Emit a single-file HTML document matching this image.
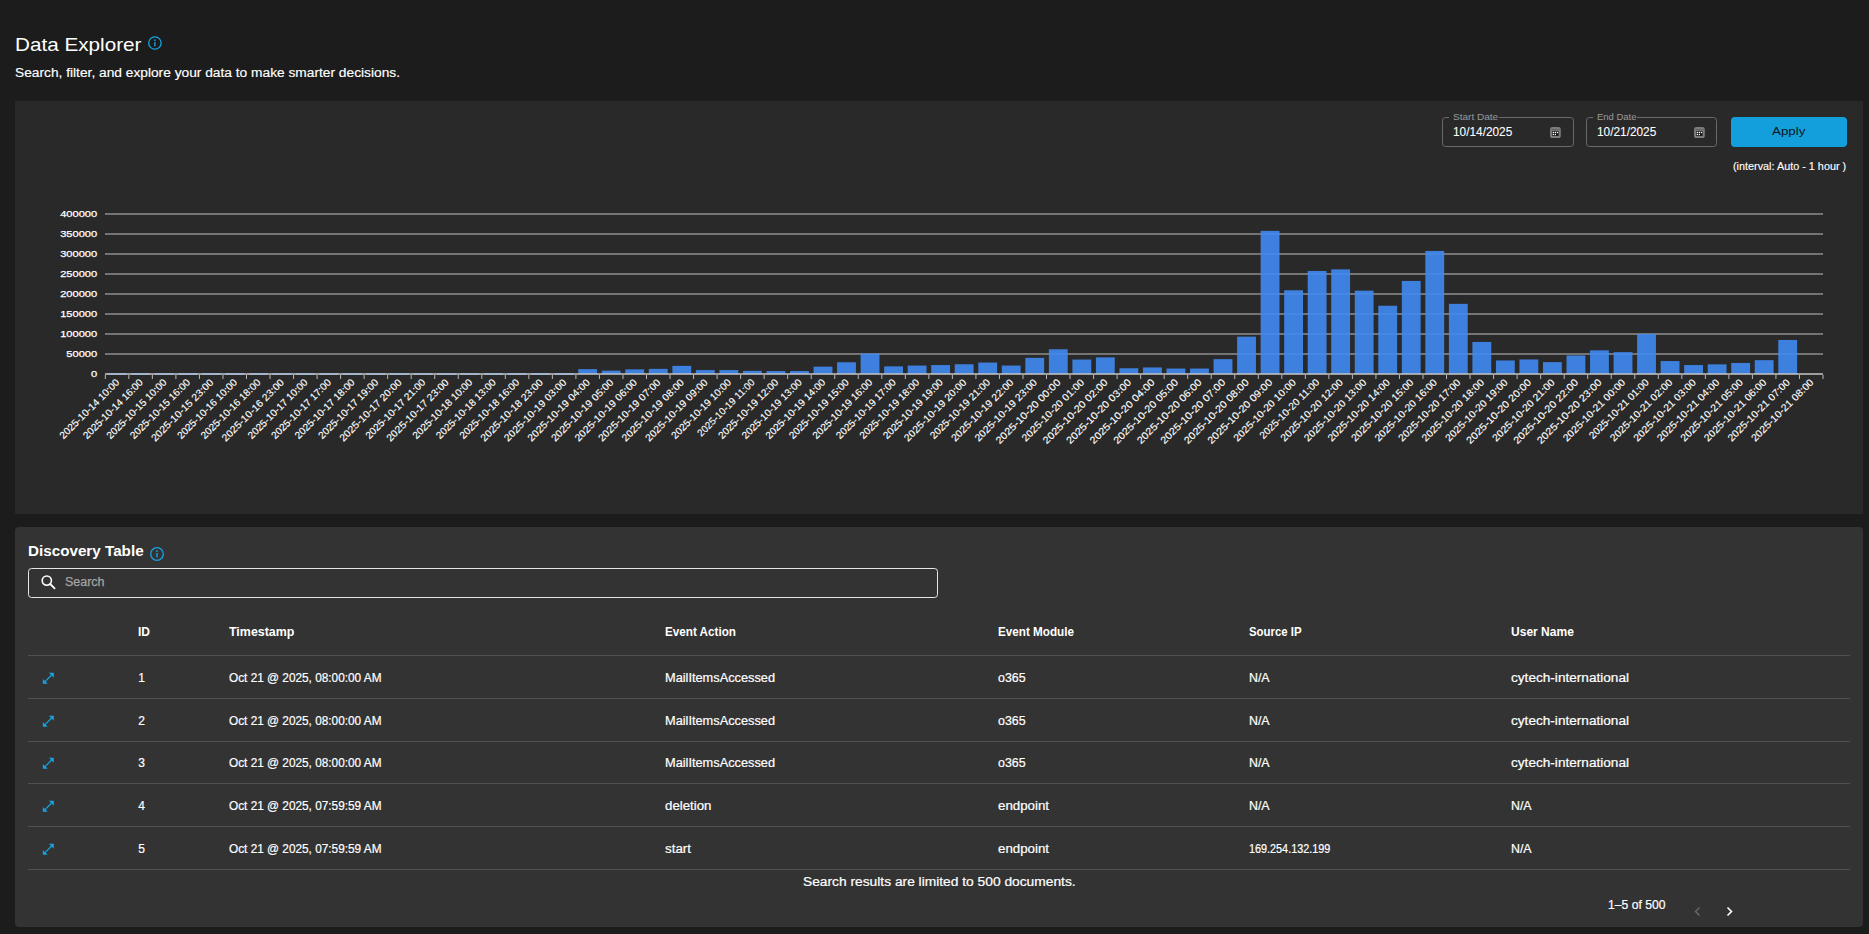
<!DOCTYPE html>
<html><head><meta charset="utf-8"><style>
html,body{margin:0;padding:0;}
body{width:1869px;height:934px;background:#1c1c1c;position:relative;overflow:hidden;font-family:"Liberation Sans",sans-serif;}
.t{position:absolute;white-space:nowrap;line-height:1em;transform-origin:0 0;}
.abs{position:absolute;}
</style></head><body>
<div class="t" style="left:14.60px;top:35.96px;font-size:18.6px;color:#fff;transform:scaleX(1.1124);">Data Explorer</div>
<svg class="abs" style="left:147px;top:36px" width="16" height="16" viewBox="0 0 16 16"><circle cx="7.9" cy="7" r="6.2" fill="none" stroke="#14a3e3" stroke-width="1.3"/><rect x="7.2" y="6" width="1.4" height="4.3" fill="#14a3e3"/><circle cx="7.9" cy="4.2" r="0.85" fill="#14a3e3"/></svg>
<div class="t" style="left:15.00px;top:67.04px;font-size:12px;color:#fff;-webkit-text-stroke:0.15px #fff;transform:scaleX(1.1452);">Search, filter, and explore your data to make smarter decisions.</div>
<div class="abs" style="left:15px;top:101px;width:1848px;height:413px;background:#292929"></div>
<div class="abs" style="left:1442px;top:117px;width:129.5px;height:27.6px;border:1px solid #6a6a6a;border-radius:3.5px;box-sizing:content-box"></div>
<div class="abs" style="left:1449px;top:115px;width:50.2px;height:5px;background:#292929"></div>
<div class="t" style="left:1453.00px;top:112.70px;font-size:8.5px;color:#9a9a9a;transform:scaleX(1.1812);">Start Date</div>
<div class="t" style="left:1453.10px;top:126.04px;font-size:12px;color:#fff;-webkit-text-stroke:0.08px #fff;transform:scaleX(0.9873);">10/14/2025</div>
<svg class="abs" style="left:1550.00px;top:126.9px" width="11" height="11.4" viewBox="0 0 11 11.4"><rect x="0" y="0" width="10.8" height="11.2" rx="2.2" fill="#7c7c7c"/><rect x="1.4" y="2.3" width="8" height="0.9" fill="#5a5a5a"/><rect x="2.15" y="4.2" width="6.5" height="4.7" fill="#171717"/><circle cx="3.35" cy="5.6" r="0.75" fill="#fff"/><circle cx="5.35" cy="5.6" r="0.75" fill="#fff"/><circle cx="7.45" cy="5.6" r="0.75" fill="#fff"/><circle cx="3.35" cy="7.6" r="0.75" fill="#fff"/><circle cx="5.35" cy="7.6" r="0.75" fill="#fff"/></svg>
<div class="abs" style="left:1585.6px;top:117px;width:129.5px;height:27.6px;border:1px solid #6a6a6a;border-radius:3.5px;box-sizing:content-box"></div>
<div class="abs" style="left:1592.6px;top:115px;width:44.5px;height:5px;background:#292929"></div>
<div class="t" style="left:1596.60px;top:112.70px;font-size:8.5px;color:#9a9a9a;transform:scaleX(1.1145);">End Date</div>
<div class="t" style="left:1596.70px;top:126.04px;font-size:12px;color:#fff;-webkit-text-stroke:0.08px #fff;transform:scaleX(0.9873);">10/21/2025</div>
<svg class="abs" style="left:1693.60px;top:126.9px" width="11" height="11.4" viewBox="0 0 11 11.4"><rect x="0" y="0" width="10.8" height="11.2" rx="2.2" fill="#7c7c7c"/><rect x="1.4" y="2.3" width="8" height="0.9" fill="#5a5a5a"/><rect x="2.15" y="4.2" width="6.5" height="4.7" fill="#171717"/><circle cx="3.35" cy="5.6" r="0.75" fill="#fff"/><circle cx="5.35" cy="5.6" r="0.75" fill="#fff"/><circle cx="7.45" cy="5.6" r="0.75" fill="#fff"/><circle cx="3.35" cy="7.6" r="0.75" fill="#fff"/><circle cx="5.35" cy="7.6" r="0.75" fill="#fff"/></svg>
<div class="abs" style="left:1731px;top:117px;width:116px;height:30px;background:#129fdc;border-radius:4px"></div>
<div class="t" style="left:1772.10px;top:125.59px;font-size:11px;color:#0b1620;transform:scaleX(1.2138);">Apply</div>
<div class="t" style="left:1733.10px;top:162.08px;font-size:10.3px;color:#fff;-webkit-text-stroke:0.12px #fff;transform:scaleX(1.0517);">(interval: Auto - 1 hour )</div>
<svg class="abs" style="left:0;top:0" width="1869" height="520" viewBox="0 0 1869 520"><rect x="105" y="353" width="1718" height="2" fill="#747474"/><rect x="105" y="333" width="1718" height="2" fill="#747474"/><rect x="105" y="313" width="1718" height="2" fill="#747474"/><rect x="105" y="293" width="1718" height="2" fill="#747474"/><rect x="105" y="273" width="1718" height="2" fill="#747474"/><rect x="105" y="253" width="1718" height="2" fill="#747474"/><rect x="105" y="233" width="1718" height="2" fill="#747474"/><rect x="105" y="213" width="1718" height="2" fill="#747474"/><rect x="107.65" y="373" width="18.85" height="2" fill="#408af2" fill-opacity="0.9"/><rect x="131.18" y="373" width="18.85" height="2" fill="#408af2" fill-opacity="0.9"/><rect x="154.71" y="373" width="18.85" height="2" fill="#408af2" fill-opacity="0.9"/><rect x="178.24" y="373" width="18.85" height="2" fill="#408af2" fill-opacity="0.9"/><rect x="201.77" y="373" width="18.85" height="2" fill="#408af2" fill-opacity="0.9"/><rect x="225.30" y="373" width="18.85" height="2" fill="#408af2" fill-opacity="0.9"/><rect x="248.83" y="373" width="18.85" height="2" fill="#408af2" fill-opacity="0.9"/><rect x="272.36" y="373" width="18.85" height="2" fill="#408af2" fill-opacity="0.9"/><rect x="295.89" y="373" width="18.85" height="2" fill="#408af2" fill-opacity="0.9"/><rect x="319.42" y="373" width="18.85" height="2" fill="#408af2" fill-opacity="0.9"/><rect x="342.95" y="373" width="18.85" height="2" fill="#408af2" fill-opacity="0.9"/><rect x="366.48" y="373" width="18.85" height="2" fill="#408af2" fill-opacity="0.9"/><rect x="390.01" y="373" width="18.85" height="2" fill="#408af2" fill-opacity="0.9"/><rect x="413.54" y="373" width="18.85" height="2" fill="#408af2" fill-opacity="0.9"/><rect x="437.07" y="373" width="18.85" height="2" fill="#408af2" fill-opacity="0.9"/><rect x="460.60" y="373" width="18.85" height="2" fill="#408af2" fill-opacity="0.9"/><rect x="484.13" y="373" width="18.85" height="2" fill="#408af2" fill-opacity="0.9"/><rect x="507.66" y="373" width="18.85" height="2" fill="#408af2" fill-opacity="0.9"/><rect x="531.19" y="373" width="18.85" height="2" fill="#408af2" fill-opacity="0.9"/><rect x="554.72" y="373" width="18.85" height="2" fill="#408af2" fill-opacity="0.9"/><rect x="578.25" y="369.15" width="18.85" height="4.85" fill="#408af2" fill-opacity="0.9"/><rect x="601.78" y="370.65" width="18.85" height="3.35" fill="#408af2" fill-opacity="0.9"/><rect x="625.31" y="369.35" width="18.85" height="4.65" fill="#408af2" fill-opacity="0.9"/><rect x="648.84" y="368.85" width="18.85" height="5.15" fill="#408af2" fill-opacity="0.9"/><rect x="672.37" y="365.85" width="18.85" height="8.15" fill="#408af2" fill-opacity="0.9"/><rect x="695.90" y="370.05" width="18.85" height="3.95" fill="#408af2" fill-opacity="0.9"/><rect x="719.43" y="370.05" width="18.85" height="3.95" fill="#408af2" fill-opacity="0.9"/><rect x="742.96" y="370.85" width="18.85" height="3.15" fill="#408af2" fill-opacity="0.9"/><rect x="766.49" y="371.05" width="18.85" height="2.95" fill="#408af2" fill-opacity="0.9"/><rect x="790.02" y="371.05" width="18.85" height="2.95" fill="#408af2" fill-opacity="0.9"/><rect x="813.55" y="366.65" width="18.85" height="7.35" fill="#408af2" fill-opacity="0.9"/><rect x="837.08" y="362.25" width="18.85" height="11.75" fill="#408af2" fill-opacity="0.9"/><rect x="860.61" y="353.55" width="18.85" height="20.45" fill="#408af2" fill-opacity="0.9"/><rect x="884.14" y="366.35" width="18.85" height="7.65" fill="#408af2" fill-opacity="0.9"/><rect x="907.67" y="365.55" width="18.85" height="8.45" fill="#408af2" fill-opacity="0.9"/><rect x="931.20" y="365.05" width="18.85" height="8.95" fill="#408af2" fill-opacity="0.9"/><rect x="954.73" y="364.25" width="18.85" height="9.75" fill="#408af2" fill-opacity="0.9"/><rect x="978.27" y="362.55" width="18.85" height="11.45" fill="#408af2" fill-opacity="0.9"/><rect x="1001.80" y="365.55" width="18.85" height="8.45" fill="#408af2" fill-opacity="0.9"/><rect x="1025.33" y="357.85" width="18.85" height="16.15" fill="#408af2" fill-opacity="0.9"/><rect x="1048.86" y="349.25" width="18.85" height="24.75" fill="#408af2" fill-opacity="0.9"/><rect x="1072.39" y="359.55" width="18.85" height="14.45" fill="#408af2" fill-opacity="0.9"/><rect x="1095.92" y="357.35" width="18.85" height="16.65" fill="#408af2" fill-opacity="0.9"/><rect x="1119.45" y="368.25" width="18.85" height="5.75" fill="#408af2" fill-opacity="0.9"/><rect x="1142.98" y="367.45" width="18.85" height="6.55" fill="#408af2" fill-opacity="0.9"/><rect x="1166.51" y="368.55" width="18.85" height="5.45" fill="#408af2" fill-opacity="0.9"/><rect x="1190.04" y="368.55" width="18.85" height="5.45" fill="#408af2" fill-opacity="0.9"/><rect x="1213.57" y="359.15" width="18.85" height="14.85" fill="#408af2" fill-opacity="0.9"/><rect x="1237.10" y="336.65" width="18.85" height="37.35" fill="#408af2" fill-opacity="0.9"/><rect x="1260.63" y="230.85" width="18.85" height="143.15" fill="#408af2" fill-opacity="0.9"/><rect x="1284.16" y="290.25" width="18.85" height="83.75" fill="#408af2" fill-opacity="0.9"/><rect x="1307.69" y="270.95" width="18.85" height="103.05" fill="#408af2" fill-opacity="0.9"/><rect x="1331.22" y="269.35" width="18.85" height="104.65" fill="#408af2" fill-opacity="0.9"/><rect x="1354.75" y="290.65" width="18.85" height="83.35" fill="#408af2" fill-opacity="0.9"/><rect x="1378.28" y="305.75" width="18.85" height="68.25" fill="#408af2" fill-opacity="0.9"/><rect x="1401.81" y="280.95" width="18.85" height="93.05" fill="#408af2" fill-opacity="0.9"/><rect x="1425.34" y="250.95" width="18.85" height="123.05" fill="#408af2" fill-opacity="0.9"/><rect x="1448.87" y="303.85" width="18.85" height="70.15" fill="#408af2" fill-opacity="0.9"/><rect x="1472.40" y="341.95" width="18.85" height="32.05" fill="#408af2" fill-opacity="0.9"/><rect x="1495.93" y="360.45" width="18.85" height="13.55" fill="#408af2" fill-opacity="0.9"/><rect x="1519.46" y="359.45" width="18.85" height="14.55" fill="#408af2" fill-opacity="0.9"/><rect x="1542.99" y="362.15" width="18.85" height="11.85" fill="#408af2" fill-opacity="0.9"/><rect x="1566.52" y="355.45" width="18.85" height="18.55" fill="#408af2" fill-opacity="0.9"/><rect x="1590.05" y="350.35" width="18.85" height="23.65" fill="#408af2" fill-opacity="0.9"/><rect x="1613.58" y="352.15" width="18.85" height="21.85" fill="#408af2" fill-opacity="0.9"/><rect x="1637.11" y="333.95" width="18.85" height="40.05" fill="#408af2" fill-opacity="0.9"/><rect x="1660.64" y="361.05" width="18.85" height="12.95" fill="#408af2" fill-opacity="0.9"/><rect x="1684.17" y="365.05" width="18.85" height="8.95" fill="#408af2" fill-opacity="0.9"/><rect x="1707.70" y="364.35" width="18.85" height="9.65" fill="#408af2" fill-opacity="0.9"/><rect x="1731.23" y="362.95" width="18.85" height="11.05" fill="#408af2" fill-opacity="0.9"/><rect x="1754.76" y="360.15" width="18.85" height="13.85" fill="#408af2" fill-opacity="0.9"/><rect x="1778.29" y="339.95" width="18.85" height="34.05" fill="#408af2" fill-opacity="0.9"/><rect x="105" y="373" width="1718" height="2" fill="#c6c6c6" fill-opacity="0.75"/><rect x="104.80" y="375" width="1" height="4" fill="#b8b8b8"/><rect x="128.33" y="375" width="1" height="4" fill="#b8b8b8"/><rect x="151.86" y="375" width="1" height="4" fill="#b8b8b8"/><rect x="175.39" y="375" width="1" height="4" fill="#b8b8b8"/><rect x="198.92" y="375" width="1" height="4" fill="#b8b8b8"/><rect x="222.45" y="375" width="1" height="4" fill="#b8b8b8"/><rect x="245.98" y="375" width="1" height="4" fill="#b8b8b8"/><rect x="269.51" y="375" width="1" height="4" fill="#b8b8b8"/><rect x="293.04" y="375" width="1" height="4" fill="#b8b8b8"/><rect x="316.57" y="375" width="1" height="4" fill="#b8b8b8"/><rect x="340.10" y="375" width="1" height="4" fill="#b8b8b8"/><rect x="363.63" y="375" width="1" height="4" fill="#b8b8b8"/><rect x="387.16" y="375" width="1" height="4" fill="#b8b8b8"/><rect x="410.69" y="375" width="1" height="4" fill="#b8b8b8"/><rect x="434.22" y="375" width="1" height="4" fill="#b8b8b8"/><rect x="457.75" y="375" width="1" height="4" fill="#b8b8b8"/><rect x="481.28" y="375" width="1" height="4" fill="#b8b8b8"/><rect x="504.81" y="375" width="1" height="4" fill="#b8b8b8"/><rect x="528.34" y="375" width="1" height="4" fill="#b8b8b8"/><rect x="551.87" y="375" width="1" height="4" fill="#b8b8b8"/><rect x="575.40" y="375" width="1" height="4" fill="#b8b8b8"/><rect x="598.93" y="375" width="1" height="4" fill="#b8b8b8"/><rect x="622.46" y="375" width="1" height="4" fill="#b8b8b8"/><rect x="645.99" y="375" width="1" height="4" fill="#b8b8b8"/><rect x="669.52" y="375" width="1" height="4" fill="#b8b8b8"/><rect x="693.05" y="375" width="1" height="4" fill="#b8b8b8"/><rect x="716.58" y="375" width="1" height="4" fill="#b8b8b8"/><rect x="740.11" y="375" width="1" height="4" fill="#b8b8b8"/><rect x="763.64" y="375" width="1" height="4" fill="#b8b8b8"/><rect x="787.17" y="375" width="1" height="4" fill="#b8b8b8"/><rect x="810.70" y="375" width="1" height="4" fill="#b8b8b8"/><rect x="834.23" y="375" width="1" height="4" fill="#b8b8b8"/><rect x="857.76" y="375" width="1" height="4" fill="#b8b8b8"/><rect x="881.29" y="375" width="1" height="4" fill="#b8b8b8"/><rect x="904.82" y="375" width="1" height="4" fill="#b8b8b8"/><rect x="928.35" y="375" width="1" height="4" fill="#b8b8b8"/><rect x="951.88" y="375" width="1" height="4" fill="#b8b8b8"/><rect x="975.42" y="375" width="1" height="4" fill="#b8b8b8"/><rect x="998.95" y="375" width="1" height="4" fill="#b8b8b8"/><rect x="1022.48" y="375" width="1" height="4" fill="#b8b8b8"/><rect x="1046.01" y="375" width="1" height="4" fill="#b8b8b8"/><rect x="1069.54" y="375" width="1" height="4" fill="#b8b8b8"/><rect x="1093.07" y="375" width="1" height="4" fill="#b8b8b8"/><rect x="1116.60" y="375" width="1" height="4" fill="#b8b8b8"/><rect x="1140.13" y="375" width="1" height="4" fill="#b8b8b8"/><rect x="1163.66" y="375" width="1" height="4" fill="#b8b8b8"/><rect x="1187.19" y="375" width="1" height="4" fill="#b8b8b8"/><rect x="1210.72" y="375" width="1" height="4" fill="#b8b8b8"/><rect x="1234.25" y="375" width="1" height="4" fill="#b8b8b8"/><rect x="1257.78" y="375" width="1" height="4" fill="#b8b8b8"/><rect x="1281.31" y="375" width="1" height="4" fill="#b8b8b8"/><rect x="1304.84" y="375" width="1" height="4" fill="#b8b8b8"/><rect x="1328.37" y="375" width="1" height="4" fill="#b8b8b8"/><rect x="1351.90" y="375" width="1" height="4" fill="#b8b8b8"/><rect x="1375.43" y="375" width="1" height="4" fill="#b8b8b8"/><rect x="1398.96" y="375" width="1" height="4" fill="#b8b8b8"/><rect x="1422.49" y="375" width="1" height="4" fill="#b8b8b8"/><rect x="1446.02" y="375" width="1" height="4" fill="#b8b8b8"/><rect x="1469.55" y="375" width="1" height="4" fill="#b8b8b8"/><rect x="1493.08" y="375" width="1" height="4" fill="#b8b8b8"/><rect x="1516.61" y="375" width="1" height="4" fill="#b8b8b8"/><rect x="1540.14" y="375" width="1" height="4" fill="#b8b8b8"/><rect x="1563.67" y="375" width="1" height="4" fill="#b8b8b8"/><rect x="1587.20" y="375" width="1" height="4" fill="#b8b8b8"/><rect x="1610.73" y="375" width="1" height="4" fill="#b8b8b8"/><rect x="1634.26" y="375" width="1" height="4" fill="#b8b8b8"/><rect x="1657.79" y="375" width="1" height="4" fill="#b8b8b8"/><rect x="1681.32" y="375" width="1" height="4" fill="#b8b8b8"/><rect x="1704.85" y="375" width="1" height="4" fill="#b8b8b8"/><rect x="1728.38" y="375" width="1" height="4" fill="#b8b8b8"/><rect x="1751.91" y="375" width="1" height="4" fill="#b8b8b8"/><rect x="1775.44" y="375" width="1" height="4" fill="#b8b8b8"/><rect x="1798.97" y="375" width="1" height="4" fill="#b8b8b8"/><rect x="1822.50" y="375" width="1" height="4" fill="#b8b8b8"/><text x="97.2" y="376.9" text-anchor="end" font-size="9.4" textLength="6.2" lengthAdjust="spacingAndGlyphs" fill="#fff" stroke="#fff" stroke-width="0.25" font-family="Liberation Sans">0</text><text x="97.2" y="356.9" text-anchor="end" font-size="9.4" textLength="30.9" lengthAdjust="spacingAndGlyphs" fill="#fff" stroke="#fff" stroke-width="0.25" font-family="Liberation Sans">50000</text><text x="97.2" y="336.9" text-anchor="end" font-size="9.4" textLength="37.0" lengthAdjust="spacingAndGlyphs" fill="#fff" stroke="#fff" stroke-width="0.25" font-family="Liberation Sans">100000</text><text x="97.2" y="316.9" text-anchor="end" font-size="9.4" textLength="37.0" lengthAdjust="spacingAndGlyphs" fill="#fff" stroke="#fff" stroke-width="0.25" font-family="Liberation Sans">150000</text><text x="97.2" y="296.9" text-anchor="end" font-size="9.4" textLength="37.0" lengthAdjust="spacingAndGlyphs" fill="#fff" stroke="#fff" stroke-width="0.25" font-family="Liberation Sans">200000</text><text x="97.2" y="276.9" text-anchor="end" font-size="9.4" textLength="37.0" lengthAdjust="spacingAndGlyphs" fill="#fff" stroke="#fff" stroke-width="0.25" font-family="Liberation Sans">250000</text><text x="97.2" y="256.9" text-anchor="end" font-size="9.4" textLength="37.0" lengthAdjust="spacingAndGlyphs" fill="#fff" stroke="#fff" stroke-width="0.25" font-family="Liberation Sans">300000</text><text x="97.2" y="236.9" text-anchor="end" font-size="9.4" textLength="37.0" lengthAdjust="spacingAndGlyphs" fill="#fff" stroke="#fff" stroke-width="0.25" font-family="Liberation Sans">350000</text><text x="97.2" y="216.9" text-anchor="end" font-size="9.4" textLength="37.0" lengthAdjust="spacingAndGlyphs" fill="#fff" stroke="#fff" stroke-width="0.25" font-family="Liberation Sans">400000</text><text x="120.07" y="383" text-anchor="end" font-size="10" textLength="80.0" lengthAdjust="spacingAndGlyphs" fill="#fff" stroke="#fff" stroke-width="0.12" font-family="Liberation Sans" transform="rotate(-45 120.07 383)">2025-10-14 10:00</text><text x="143.60" y="383" text-anchor="end" font-size="10" textLength="80.0" lengthAdjust="spacingAndGlyphs" fill="#fff" stroke="#fff" stroke-width="0.12" font-family="Liberation Sans" transform="rotate(-45 143.60 383)">2025-10-14 16:00</text><text x="167.13" y="383" text-anchor="end" font-size="10" textLength="80.0" lengthAdjust="spacingAndGlyphs" fill="#fff" stroke="#fff" stroke-width="0.12" font-family="Liberation Sans" transform="rotate(-45 167.13 383)">2025-10-15 10:00</text><text x="190.66" y="383" text-anchor="end" font-size="10" textLength="80.0" lengthAdjust="spacingAndGlyphs" fill="#fff" stroke="#fff" stroke-width="0.12" font-family="Liberation Sans" transform="rotate(-45 190.66 383)">2025-10-15 16:00</text><text x="214.19" y="383" text-anchor="end" font-size="10" textLength="83.5" lengthAdjust="spacingAndGlyphs" fill="#fff" stroke="#fff" stroke-width="0.12" font-family="Liberation Sans" transform="rotate(-45 214.19 383)">2025-10-15 23:00</text><text x="237.72" y="383" text-anchor="end" font-size="10" textLength="80.0" lengthAdjust="spacingAndGlyphs" fill="#fff" stroke="#fff" stroke-width="0.12" font-family="Liberation Sans" transform="rotate(-45 237.72 383)">2025-10-16 10:00</text><text x="261.25" y="383" text-anchor="end" font-size="10" textLength="80.0" lengthAdjust="spacingAndGlyphs" fill="#fff" stroke="#fff" stroke-width="0.12" font-family="Liberation Sans" transform="rotate(-45 261.25 383)">2025-10-16 18:00</text><text x="284.78" y="383" text-anchor="end" font-size="10" textLength="83.5" lengthAdjust="spacingAndGlyphs" fill="#fff" stroke="#fff" stroke-width="0.12" font-family="Liberation Sans" transform="rotate(-45 284.78 383)">2025-10-16 23:00</text><text x="308.31" y="383" text-anchor="end" font-size="10" textLength="80.0" lengthAdjust="spacingAndGlyphs" fill="#fff" stroke="#fff" stroke-width="0.12" font-family="Liberation Sans" transform="rotate(-45 308.31 383)">2025-10-17 10:00</text><text x="331.84" y="383" text-anchor="end" font-size="10" textLength="80.0" lengthAdjust="spacingAndGlyphs" fill="#fff" stroke="#fff" stroke-width="0.12" font-family="Liberation Sans" transform="rotate(-45 331.84 383)">2025-10-17 17:00</text><text x="355.37" y="383" text-anchor="end" font-size="10" textLength="80.0" lengthAdjust="spacingAndGlyphs" fill="#fff" stroke="#fff" stroke-width="0.12" font-family="Liberation Sans" transform="rotate(-45 355.37 383)">2025-10-17 18:00</text><text x="378.90" y="383" text-anchor="end" font-size="10" textLength="80.0" lengthAdjust="spacingAndGlyphs" fill="#fff" stroke="#fff" stroke-width="0.12" font-family="Liberation Sans" transform="rotate(-45 378.90 383)">2025-10-17 19:00</text><text x="402.43" y="383" text-anchor="end" font-size="10" textLength="83.5" lengthAdjust="spacingAndGlyphs" fill="#fff" stroke="#fff" stroke-width="0.12" font-family="Liberation Sans" transform="rotate(-45 402.43 383)">2025-10-17 20:00</text><text x="425.96" y="383" text-anchor="end" font-size="10" textLength="80.0" lengthAdjust="spacingAndGlyphs" fill="#fff" stroke="#fff" stroke-width="0.12" font-family="Liberation Sans" transform="rotate(-45 425.96 383)">2025-10-17 21:00</text><text x="449.49" y="383" text-anchor="end" font-size="10" textLength="83.5" lengthAdjust="spacingAndGlyphs" fill="#fff" stroke="#fff" stroke-width="0.12" font-family="Liberation Sans" transform="rotate(-45 449.49 383)">2025-10-17 23:00</text><text x="473.02" y="383" text-anchor="end" font-size="10" textLength="80.0" lengthAdjust="spacingAndGlyphs" fill="#fff" stroke="#fff" stroke-width="0.12" font-family="Liberation Sans" transform="rotate(-45 473.02 383)">2025-10-18 10:00</text><text x="496.55" y="383" text-anchor="end" font-size="10" textLength="80.0" lengthAdjust="spacingAndGlyphs" fill="#fff" stroke="#fff" stroke-width="0.12" font-family="Liberation Sans" transform="rotate(-45 496.55 383)">2025-10-18 13:00</text><text x="520.08" y="383" text-anchor="end" font-size="10" textLength="80.0" lengthAdjust="spacingAndGlyphs" fill="#fff" stroke="#fff" stroke-width="0.12" font-family="Liberation Sans" transform="rotate(-45 520.08 383)">2025-10-18 16:00</text><text x="543.61" y="383" text-anchor="end" font-size="10" textLength="83.5" lengthAdjust="spacingAndGlyphs" fill="#fff" stroke="#fff" stroke-width="0.12" font-family="Liberation Sans" transform="rotate(-45 543.61 383)">2025-10-18 23:00</text><text x="567.14" y="383" text-anchor="end" font-size="10" textLength="83.5" lengthAdjust="spacingAndGlyphs" fill="#fff" stroke="#fff" stroke-width="0.12" font-family="Liberation Sans" transform="rotate(-45 567.14 383)">2025-10-19 03:00</text><text x="590.67" y="383" text-anchor="end" font-size="10" textLength="83.5" lengthAdjust="spacingAndGlyphs" fill="#fff" stroke="#fff" stroke-width="0.12" font-family="Liberation Sans" transform="rotate(-45 590.67 383)">2025-10-19 04:00</text><text x="614.20" y="383" text-anchor="end" font-size="10" textLength="83.5" lengthAdjust="spacingAndGlyphs" fill="#fff" stroke="#fff" stroke-width="0.12" font-family="Liberation Sans" transform="rotate(-45 614.20 383)">2025-10-19 05:00</text><text x="637.73" y="383" text-anchor="end" font-size="10" textLength="83.5" lengthAdjust="spacingAndGlyphs" fill="#fff" stroke="#fff" stroke-width="0.12" font-family="Liberation Sans" transform="rotate(-45 637.73 383)">2025-10-19 06:00</text><text x="661.26" y="383" text-anchor="end" font-size="10" textLength="83.5" lengthAdjust="spacingAndGlyphs" fill="#fff" stroke="#fff" stroke-width="0.12" font-family="Liberation Sans" transform="rotate(-45 661.26 383)">2025-10-19 07:00</text><text x="684.79" y="383" text-anchor="end" font-size="10" textLength="83.5" lengthAdjust="spacingAndGlyphs" fill="#fff" stroke="#fff" stroke-width="0.12" font-family="Liberation Sans" transform="rotate(-45 684.79 383)">2025-10-19 08:00</text><text x="708.32" y="383" text-anchor="end" font-size="10" textLength="83.5" lengthAdjust="spacingAndGlyphs" fill="#fff" stroke="#fff" stroke-width="0.12" font-family="Liberation Sans" transform="rotate(-45 708.32 383)">2025-10-19 09:00</text><text x="731.85" y="383" text-anchor="end" font-size="10" textLength="80.0" lengthAdjust="spacingAndGlyphs" fill="#fff" stroke="#fff" stroke-width="0.12" font-family="Liberation Sans" transform="rotate(-45 731.85 383)">2025-10-19 10:00</text><text x="755.38" y="383" text-anchor="end" font-size="10" textLength="76.5" lengthAdjust="spacingAndGlyphs" fill="#fff" stroke="#fff" stroke-width="0.12" font-family="Liberation Sans" transform="rotate(-45 755.38 383)">2025-10-19 11:00</text><text x="778.91" y="383" text-anchor="end" font-size="10" textLength="80.0" lengthAdjust="spacingAndGlyphs" fill="#fff" stroke="#fff" stroke-width="0.12" font-family="Liberation Sans" transform="rotate(-45 778.91 383)">2025-10-19 12:00</text><text x="802.44" y="383" text-anchor="end" font-size="10" textLength="80.0" lengthAdjust="spacingAndGlyphs" fill="#fff" stroke="#fff" stroke-width="0.12" font-family="Liberation Sans" transform="rotate(-45 802.44 383)">2025-10-19 13:00</text><text x="825.97" y="383" text-anchor="end" font-size="10" textLength="80.0" lengthAdjust="spacingAndGlyphs" fill="#fff" stroke="#fff" stroke-width="0.12" font-family="Liberation Sans" transform="rotate(-45 825.97 383)">2025-10-19 14:00</text><text x="849.50" y="383" text-anchor="end" font-size="10" textLength="80.0" lengthAdjust="spacingAndGlyphs" fill="#fff" stroke="#fff" stroke-width="0.12" font-family="Liberation Sans" transform="rotate(-45 849.50 383)">2025-10-19 15:00</text><text x="873.03" y="383" text-anchor="end" font-size="10" textLength="80.0" lengthAdjust="spacingAndGlyphs" fill="#fff" stroke="#fff" stroke-width="0.12" font-family="Liberation Sans" transform="rotate(-45 873.03 383)">2025-10-19 16:00</text><text x="896.56" y="383" text-anchor="end" font-size="10" textLength="80.0" lengthAdjust="spacingAndGlyphs" fill="#fff" stroke="#fff" stroke-width="0.12" font-family="Liberation Sans" transform="rotate(-45 896.56 383)">2025-10-19 17:00</text><text x="920.09" y="383" text-anchor="end" font-size="10" textLength="80.0" lengthAdjust="spacingAndGlyphs" fill="#fff" stroke="#fff" stroke-width="0.12" font-family="Liberation Sans" transform="rotate(-45 920.09 383)">2025-10-19 18:00</text><text x="943.62" y="383" text-anchor="end" font-size="10" textLength="80.0" lengthAdjust="spacingAndGlyphs" fill="#fff" stroke="#fff" stroke-width="0.12" font-family="Liberation Sans" transform="rotate(-45 943.62 383)">2025-10-19 19:00</text><text x="967.15" y="383" text-anchor="end" font-size="10" textLength="83.5" lengthAdjust="spacingAndGlyphs" fill="#fff" stroke="#fff" stroke-width="0.12" font-family="Liberation Sans" transform="rotate(-45 967.15 383)">2025-10-19 20:00</text><text x="990.68" y="383" text-anchor="end" font-size="10" textLength="80.0" lengthAdjust="spacingAndGlyphs" fill="#fff" stroke="#fff" stroke-width="0.12" font-family="Liberation Sans" transform="rotate(-45 990.68 383)">2025-10-19 21:00</text><text x="1014.21" y="383" text-anchor="end" font-size="10" textLength="83.5" lengthAdjust="spacingAndGlyphs" fill="#fff" stroke="#fff" stroke-width="0.12" font-family="Liberation Sans" transform="rotate(-45 1014.21 383)">2025-10-19 22:00</text><text x="1037.74" y="383" text-anchor="end" font-size="10" textLength="83.5" lengthAdjust="spacingAndGlyphs" fill="#fff" stroke="#fff" stroke-width="0.12" font-family="Liberation Sans" transform="rotate(-45 1037.74 383)">2025-10-19 23:00</text><text x="1061.27" y="383" text-anchor="end" font-size="10" textLength="87.0" lengthAdjust="spacingAndGlyphs" fill="#fff" stroke="#fff" stroke-width="0.12" font-family="Liberation Sans" transform="rotate(-45 1061.27 383)">2025-10-20 00:00</text><text x="1084.80" y="383" text-anchor="end" font-size="10" textLength="83.5" lengthAdjust="spacingAndGlyphs" fill="#fff" stroke="#fff" stroke-width="0.12" font-family="Liberation Sans" transform="rotate(-45 1084.80 383)">2025-10-20 01:00</text><text x="1108.33" y="383" text-anchor="end" font-size="10" textLength="87.0" lengthAdjust="spacingAndGlyphs" fill="#fff" stroke="#fff" stroke-width="0.12" font-family="Liberation Sans" transform="rotate(-45 1108.33 383)">2025-10-20 02:00</text><text x="1131.86" y="383" text-anchor="end" font-size="10" textLength="87.0" lengthAdjust="spacingAndGlyphs" fill="#fff" stroke="#fff" stroke-width="0.12" font-family="Liberation Sans" transform="rotate(-45 1131.86 383)">2025-10-20 03:00</text><text x="1155.39" y="383" text-anchor="end" font-size="10" textLength="87.0" lengthAdjust="spacingAndGlyphs" fill="#fff" stroke="#fff" stroke-width="0.12" font-family="Liberation Sans" transform="rotate(-45 1155.39 383)">2025-10-20 04:00</text><text x="1178.92" y="383" text-anchor="end" font-size="10" textLength="87.0" lengthAdjust="spacingAndGlyphs" fill="#fff" stroke="#fff" stroke-width="0.12" font-family="Liberation Sans" transform="rotate(-45 1178.92 383)">2025-10-20 05:00</text><text x="1202.45" y="383" text-anchor="end" font-size="10" textLength="87.0" lengthAdjust="spacingAndGlyphs" fill="#fff" stroke="#fff" stroke-width="0.12" font-family="Liberation Sans" transform="rotate(-45 1202.45 383)">2025-10-20 06:00</text><text x="1225.98" y="383" text-anchor="end" font-size="10" textLength="87.0" lengthAdjust="spacingAndGlyphs" fill="#fff" stroke="#fff" stroke-width="0.12" font-family="Liberation Sans" transform="rotate(-45 1225.98 383)">2025-10-20 07:00</text><text x="1249.51" y="383" text-anchor="end" font-size="10" textLength="87.0" lengthAdjust="spacingAndGlyphs" fill="#fff" stroke="#fff" stroke-width="0.12" font-family="Liberation Sans" transform="rotate(-45 1249.51 383)">2025-10-20 08:00</text><text x="1273.04" y="383" text-anchor="end" font-size="10" textLength="87.0" lengthAdjust="spacingAndGlyphs" fill="#fff" stroke="#fff" stroke-width="0.12" font-family="Liberation Sans" transform="rotate(-45 1273.04 383)">2025-10-20 09:00</text><text x="1296.57" y="383" text-anchor="end" font-size="10" textLength="83.5" lengthAdjust="spacingAndGlyphs" fill="#fff" stroke="#fff" stroke-width="0.12" font-family="Liberation Sans" transform="rotate(-45 1296.57 383)">2025-10-20 10:00</text><text x="1320.10" y="383" text-anchor="end" font-size="10" textLength="80.0" lengthAdjust="spacingAndGlyphs" fill="#fff" stroke="#fff" stroke-width="0.12" font-family="Liberation Sans" transform="rotate(-45 1320.10 383)">2025-10-20 11:00</text><text x="1343.63" y="383" text-anchor="end" font-size="10" textLength="83.5" lengthAdjust="spacingAndGlyphs" fill="#fff" stroke="#fff" stroke-width="0.12" font-family="Liberation Sans" transform="rotate(-45 1343.63 383)">2025-10-20 12:00</text><text x="1367.16" y="383" text-anchor="end" font-size="10" textLength="83.5" lengthAdjust="spacingAndGlyphs" fill="#fff" stroke="#fff" stroke-width="0.12" font-family="Liberation Sans" transform="rotate(-45 1367.16 383)">2025-10-20 13:00</text><text x="1390.69" y="383" text-anchor="end" font-size="10" textLength="83.5" lengthAdjust="spacingAndGlyphs" fill="#fff" stroke="#fff" stroke-width="0.12" font-family="Liberation Sans" transform="rotate(-45 1390.69 383)">2025-10-20 14:00</text><text x="1414.22" y="383" text-anchor="end" font-size="10" textLength="83.5" lengthAdjust="spacingAndGlyphs" fill="#fff" stroke="#fff" stroke-width="0.12" font-family="Liberation Sans" transform="rotate(-45 1414.22 383)">2025-10-20 15:00</text><text x="1437.75" y="383" text-anchor="end" font-size="10" textLength="83.5" lengthAdjust="spacingAndGlyphs" fill="#fff" stroke="#fff" stroke-width="0.12" font-family="Liberation Sans" transform="rotate(-45 1437.75 383)">2025-10-20 16:00</text><text x="1461.28" y="383" text-anchor="end" font-size="10" textLength="83.5" lengthAdjust="spacingAndGlyphs" fill="#fff" stroke="#fff" stroke-width="0.12" font-family="Liberation Sans" transform="rotate(-45 1461.28 383)">2025-10-20 17:00</text><text x="1484.81" y="383" text-anchor="end" font-size="10" textLength="83.5" lengthAdjust="spacingAndGlyphs" fill="#fff" stroke="#fff" stroke-width="0.12" font-family="Liberation Sans" transform="rotate(-45 1484.81 383)">2025-10-20 18:00</text><text x="1508.34" y="383" text-anchor="end" font-size="10" textLength="83.5" lengthAdjust="spacingAndGlyphs" fill="#fff" stroke="#fff" stroke-width="0.12" font-family="Liberation Sans" transform="rotate(-45 1508.34 383)">2025-10-20 19:00</text><text x="1531.87" y="383" text-anchor="end" font-size="10" textLength="87.0" lengthAdjust="spacingAndGlyphs" fill="#fff" stroke="#fff" stroke-width="0.12" font-family="Liberation Sans" transform="rotate(-45 1531.87 383)">2025-10-20 20:00</text><text x="1555.40" y="383" text-anchor="end" font-size="10" textLength="83.5" lengthAdjust="spacingAndGlyphs" fill="#fff" stroke="#fff" stroke-width="0.12" font-family="Liberation Sans" transform="rotate(-45 1555.40 383)">2025-10-20 21:00</text><text x="1578.93" y="383" text-anchor="end" font-size="10" textLength="87.0" lengthAdjust="spacingAndGlyphs" fill="#fff" stroke="#fff" stroke-width="0.12" font-family="Liberation Sans" transform="rotate(-45 1578.93 383)">2025-10-20 22:00</text><text x="1602.46" y="383" text-anchor="end" font-size="10" textLength="87.0" lengthAdjust="spacingAndGlyphs" fill="#fff" stroke="#fff" stroke-width="0.12" font-family="Liberation Sans" transform="rotate(-45 1602.46 383)">2025-10-20 23:00</text><text x="1625.99" y="383" text-anchor="end" font-size="10" textLength="83.5" lengthAdjust="spacingAndGlyphs" fill="#fff" stroke="#fff" stroke-width="0.12" font-family="Liberation Sans" transform="rotate(-45 1625.99 383)">2025-10-21 00:00</text><text x="1649.52" y="383" text-anchor="end" font-size="10" textLength="80.0" lengthAdjust="spacingAndGlyphs" fill="#fff" stroke="#fff" stroke-width="0.12" font-family="Liberation Sans" transform="rotate(-45 1649.52 383)">2025-10-21 01:00</text><text x="1673.05" y="383" text-anchor="end" font-size="10" textLength="83.5" lengthAdjust="spacingAndGlyphs" fill="#fff" stroke="#fff" stroke-width="0.12" font-family="Liberation Sans" transform="rotate(-45 1673.05 383)">2025-10-21 02:00</text><text x="1696.58" y="383" text-anchor="end" font-size="10" textLength="83.5" lengthAdjust="spacingAndGlyphs" fill="#fff" stroke="#fff" stroke-width="0.12" font-family="Liberation Sans" transform="rotate(-45 1696.58 383)">2025-10-21 03:00</text><text x="1720.11" y="383" text-anchor="end" font-size="10" textLength="83.5" lengthAdjust="spacingAndGlyphs" fill="#fff" stroke="#fff" stroke-width="0.12" font-family="Liberation Sans" transform="rotate(-45 1720.11 383)">2025-10-21 04:00</text><text x="1743.64" y="383" text-anchor="end" font-size="10" textLength="83.5" lengthAdjust="spacingAndGlyphs" fill="#fff" stroke="#fff" stroke-width="0.12" font-family="Liberation Sans" transform="rotate(-45 1743.64 383)">2025-10-21 05:00</text><text x="1767.17" y="383" text-anchor="end" font-size="10" textLength="83.5" lengthAdjust="spacingAndGlyphs" fill="#fff" stroke="#fff" stroke-width="0.12" font-family="Liberation Sans" transform="rotate(-45 1767.17 383)">2025-10-21 06:00</text><text x="1790.70" y="383" text-anchor="end" font-size="10" textLength="83.5" lengthAdjust="spacingAndGlyphs" fill="#fff" stroke="#fff" stroke-width="0.12" font-family="Liberation Sans" transform="rotate(-45 1790.70 383)">2025-10-21 07:00</text><text x="1814.23" y="383" text-anchor="end" font-size="10" textLength="83.5" lengthAdjust="spacingAndGlyphs" fill="#fff" stroke="#fff" stroke-width="0.12" font-family="Liberation Sans" transform="rotate(-45 1814.23 383)">2025-10-21 08:00</text></svg>
<div class="abs" style="left:15px;top:527px;width:1848px;height:400px;background:#333333;border-radius:4px"></div>
<div class="t" style="left:28.20px;top:544.35px;font-size:14px;color:#fff;font-weight:700;transform:scaleX(1.0870);">Discovery Table</div>
<svg class="abs" style="left:149px;top:546px" width="16" height="16" viewBox="0 0 16 16"><circle cx="8" cy="8" r="6.3" fill="none" stroke="#14a3e3" stroke-width="1.3"/><rect x="7.3" y="7" width="1.4" height="4.3" fill="#14a3e3"/><circle cx="8" cy="5.2" r="0.85" fill="#14a3e3"/></svg>
<div class="abs" style="left:28.2px;top:568px;width:908px;height:28px;border:1.5px solid #e6e6e6;border-radius:3.5px"></div>
<svg class="abs" style="left:39px;top:573px" width="18" height="18" viewBox="0 0 18 18"><circle cx="7.8" cy="7.6" r="4.6" fill="none" stroke="#fff" stroke-width="1.6"/><line x1="11.2" y1="11" x2="15.6" y2="15.4" stroke="#fff" stroke-width="1.8" stroke-linecap="round"/></svg>
<div class="t" style="left:64.80px;top:576.44px;font-size:12px;color:#a3a3a3;-webkit-text-stroke:0.25px #a3a3a3;transform:scaleX(1.0388);">Search</div>
<div class="t" style="left:138.30px;top:627.03px;font-size:11.9px;color:#fff;font-weight:700;transform:scaleX(1.0084);">ID</div>
<div class="t" style="left:228.80px;top:627.03px;font-size:11.9px;color:#fff;font-weight:700;transform:scaleX(1.0462);">Timestamp</div>
<div class="t" style="left:665.00px;top:627.03px;font-size:11.9px;color:#fff;font-weight:700;transform:scaleX(0.9821);">Event Action</div>
<div class="t" style="left:997.80px;top:627.03px;font-size:11.9px;color:#fff;font-weight:700;transform:scaleX(0.9824);">Event Module</div>
<div class="t" style="left:1248.60px;top:627.03px;font-size:11.9px;color:#fff;font-weight:700;transform:scaleX(0.9600);">Source IP</div>
<div class="t" style="left:1510.90px;top:627.03px;font-size:11.9px;color:#fff;font-weight:700;transform:scaleX(1.0116);">User Name</div>
<div class="abs" style="left:28px;top:654.8px;width:1822px;height:1px;background:#505050"></div>
<div class="abs" style="left:28px;top:697.8px;width:1822px;height:1px;background:#505050"></div>
<div class="abs" style="left:28px;top:740.5px;width:1822px;height:1px;background:#505050"></div>
<div class="abs" style="left:28px;top:783.0px;width:1822px;height:1px;background:#505050"></div>
<div class="abs" style="left:28px;top:825.5px;width:1822px;height:1px;background:#505050"></div>
<div class="abs" style="left:28px;top:868.5px;width:1822px;height:1px;background:#505050"></div>
<svg class="abs" style="left:41px;top:671.0px" width="14.67" height="14.67" viewBox="0 0 24 24"><path d="M21 11V3h-8l3.29 3.29-10 10L3 13v8h8l-3.29-3.29 10-10z" fill="#14a3e3"/></svg>
<div class="t" style="left:138.30px;top:671.84px;font-size:12px;color:#fff;-webkit-text-stroke:0.2px #fff;">1</div>
<div class="t" style="left:228.80px;top:671.84px;font-size:12px;color:#fff;-webkit-text-stroke:0.2px #fff;transform:scaleX(0.9842);">Oct 21 @ 2025, 08:00:00 AM</div>
<div class="t" style="left:665.00px;top:671.84px;font-size:12px;color:#fff;-webkit-text-stroke:0.2px #fff;transform:scaleX(1.0642);">MailItemsAccessed</div>
<div class="t" style="left:997.80px;top:671.84px;font-size:12px;color:#fff;-webkit-text-stroke:0.2px #fff;transform:scaleX(1.0339);">o365</div>
<div class="t" style="left:1248.60px;top:671.84px;font-size:12px;color:#fff;-webkit-text-stroke:0.2px #fff;transform:scaleX(1.0298);">N/A</div>
<div class="t" style="left:1510.90px;top:671.84px;font-size:12px;color:#fff;-webkit-text-stroke:0.2px #fff;transform:scaleX(1.1340);">cytech-international</div>
<svg class="abs" style="left:41px;top:714.0px" width="14.67" height="14.67" viewBox="0 0 24 24"><path d="M21 11V3h-8l3.29 3.29-10 10L3 13v8h8l-3.29-3.29 10-10z" fill="#14a3e3"/></svg>
<div class="t" style="left:138.30px;top:714.84px;font-size:12px;color:#fff;-webkit-text-stroke:0.2px #fff;">2</div>
<div class="t" style="left:228.80px;top:714.84px;font-size:12px;color:#fff;-webkit-text-stroke:0.2px #fff;transform:scaleX(0.9842);">Oct 21 @ 2025, 08:00:00 AM</div>
<div class="t" style="left:665.00px;top:714.84px;font-size:12px;color:#fff;-webkit-text-stroke:0.2px #fff;transform:scaleX(1.0642);">MailItemsAccessed</div>
<div class="t" style="left:997.80px;top:714.84px;font-size:12px;color:#fff;-webkit-text-stroke:0.2px #fff;transform:scaleX(1.0339);">o365</div>
<div class="t" style="left:1248.60px;top:714.84px;font-size:12px;color:#fff;-webkit-text-stroke:0.2px #fff;transform:scaleX(1.0298);">N/A</div>
<div class="t" style="left:1510.90px;top:714.84px;font-size:12px;color:#fff;-webkit-text-stroke:0.2px #fff;transform:scaleX(1.1340);">cytech-international</div>
<svg class="abs" style="left:41px;top:756.2px" width="14.67" height="14.67" viewBox="0 0 24 24"><path d="M21 11V3h-8l3.29 3.29-10 10L3 13v8h8l-3.29-3.29 10-10z" fill="#14a3e3"/></svg>
<div class="t" style="left:138.30px;top:757.04px;font-size:12px;color:#fff;-webkit-text-stroke:0.2px #fff;">3</div>
<div class="t" style="left:228.80px;top:757.04px;font-size:12px;color:#fff;-webkit-text-stroke:0.2px #fff;transform:scaleX(0.9842);">Oct 21 @ 2025, 08:00:00 AM</div>
<div class="t" style="left:665.00px;top:757.04px;font-size:12px;color:#fff;-webkit-text-stroke:0.2px #fff;transform:scaleX(1.0642);">MailItemsAccessed</div>
<div class="t" style="left:997.80px;top:757.04px;font-size:12px;color:#fff;-webkit-text-stroke:0.2px #fff;transform:scaleX(1.0339);">o365</div>
<div class="t" style="left:1248.60px;top:757.04px;font-size:12px;color:#fff;-webkit-text-stroke:0.2px #fff;transform:scaleX(1.0298);">N/A</div>
<div class="t" style="left:1510.90px;top:757.04px;font-size:12px;color:#fff;-webkit-text-stroke:0.2px #fff;transform:scaleX(1.1340);">cytech-international</div>
<svg class="abs" style="left:41px;top:799.0px" width="14.67" height="14.67" viewBox="0 0 24 24"><path d="M21 11V3h-8l3.29 3.29-10 10L3 13v8h8l-3.29-3.29 10-10z" fill="#14a3e3"/></svg>
<div class="t" style="left:138.30px;top:799.84px;font-size:12px;color:#fff;-webkit-text-stroke:0.2px #fff;">4</div>
<div class="t" style="left:228.80px;top:799.84px;font-size:12px;color:#fff;-webkit-text-stroke:0.2px #fff;transform:scaleX(0.9842);">Oct 21 @ 2025, 07:59:59 AM</div>
<div class="t" style="left:665.00px;top:799.84px;font-size:12px;color:#fff;-webkit-text-stroke:0.2px #fff;transform:scaleX(1.1062);">deletion</div>
<div class="t" style="left:997.80px;top:799.84px;font-size:12px;color:#fff;-webkit-text-stroke:0.2px #fff;transform:scaleX(1.1076);">endpoint</div>
<div class="t" style="left:1248.60px;top:799.84px;font-size:12px;color:#fff;-webkit-text-stroke:0.2px #fff;transform:scaleX(1.0298);">N/A</div>
<div class="t" style="left:1510.90px;top:799.84px;font-size:12px;color:#fff;-webkit-text-stroke:0.2px #fff;transform:scaleX(1.0298);">N/A</div>
<svg class="abs" style="left:41px;top:842.0px" width="14.67" height="14.67" viewBox="0 0 24 24"><path d="M21 11V3h-8l3.29 3.29-10 10L3 13v8h8l-3.29-3.29 10-10z" fill="#14a3e3"/></svg>
<div class="t" style="left:138.30px;top:842.84px;font-size:12px;color:#fff;-webkit-text-stroke:0.2px #fff;">5</div>
<div class="t" style="left:228.80px;top:842.84px;font-size:12px;color:#fff;-webkit-text-stroke:0.2px #fff;transform:scaleX(0.9842);">Oct 21 @ 2025, 07:59:59 AM</div>
<div class="t" style="left:665.00px;top:842.84px;font-size:12px;color:#fff;-webkit-text-stroke:0.2px #fff;transform:scaleX(1.1141);">start</div>
<div class="t" style="left:997.80px;top:842.84px;font-size:12px;color:#fff;-webkit-text-stroke:0.2px #fff;transform:scaleX(1.1076);">endpoint</div>
<div class="t" style="left:1248.60px;top:842.84px;font-size:12px;color:#fff;-webkit-text-stroke:0.2px #fff;transform:scaleX(0.9024);">169.254.132.199</div>
<div class="t" style="left:1510.90px;top:842.84px;font-size:12px;color:#fff;-webkit-text-stroke:0.2px #fff;transform:scaleX(1.0298);">N/A</div>
<div class="t" style="left:802.80px;top:876.32px;font-size:12.5px;color:#fff;-webkit-text-stroke:0.2px #fff;transform:scaleX(1.1021);">Search results are limited to 500 documents.</div>
<div class="t" style="left:1607.90px;top:899.39px;font-size:12.3px;color:#fff;-webkit-text-stroke:0.2px #fff;transform:scaleX(0.9873);">1–5 of 500</div>
<svg class="abs" style="left:1690px;top:903px" width="14" height="16" viewBox="0 0 14 16"><polyline points="9.5,4.5 5.5,8.5 9.5,12.5" fill="none" stroke="#6a6a6a" stroke-width="1.4"/></svg>
<svg class="abs" style="left:1723px;top:903px" width="14" height="16" viewBox="0 0 14 16"><polyline points="4.5,4.5 8.5,8.5 4.5,12.5" fill="none" stroke="#fff" stroke-width="1.6"/></svg>
</body></html>
